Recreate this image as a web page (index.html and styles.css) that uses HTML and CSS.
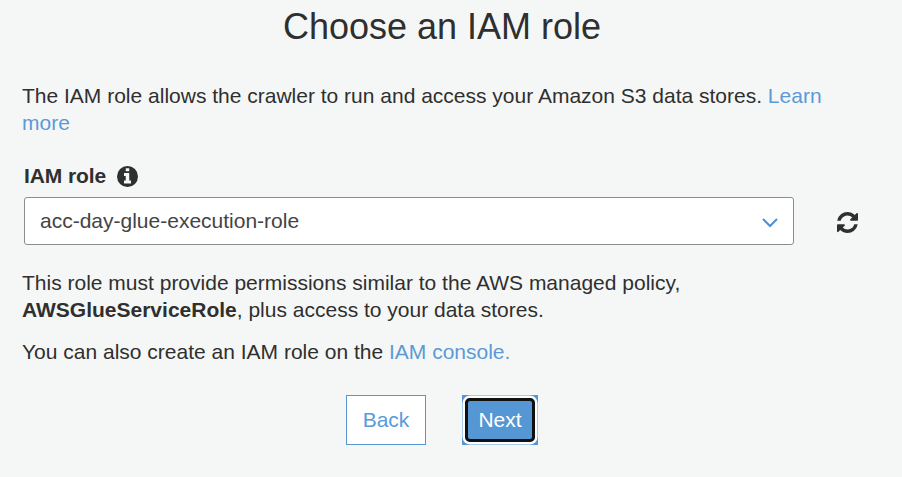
FILE: index.html
```html
<!DOCTYPE html>
<html lang="en">
<head>
<meta charset="utf-8">
<title>Choose an IAM role</title>
<link rel="stylesheet" href="styles.css">
</head>
<body>
<main class="step">
<h1 class="title">Choose an IAM role</h1>
<p class="intro">The IAM role allows the crawler to run and access your Amazon S3 data stores. <a href="#"><span>Learn</span> <span>more</span></a></p>
<div class="label-row"><span class="label">IAM role</span>
<svg class="info" viewBox="0 0 1536 1536" aria-hidden="true"><path fill="currentColor" fill-rule="evenodd" d="M768 0a768 768 0 1 1 0 1536a768 768 0 1 1 0-1536zM1024 1248v-160q0-14-9-23t-23-9h-96V544q0-14-9-23t-23-9H544q-14 0-23 9t-9 23v160q0 14 9 23t23 9h96v320h-96q-14 0-23 9t-9 23v160q0 14 9 23t23 9h448q14 0 23-9t9-23zM896 352V192q0-14-9-23t-23-9H672q-14 0-23 9t-9 23v160q0 14 9 23t23 9h192q14 0 23-9t9-23z"/></svg></div>
<div class="select-row">
<div class="select"><span class="value">acc-day-glue-execution-role</span>
<svg class="chevron" viewBox="0 0 16 10" aria-hidden="true"><path d="M1 1l7 7 7-7" fill="none" stroke="currentColor" stroke-width="2"/></svg></div>
<svg class="refresh" viewBox="0 0 1536 1536" aria-hidden="true"><path fill="currentColor" d="M1511 928q0 5-1 7-64 268-268 434.500T764 1536q-146 0-282.500-55T238 1324l-129 129q-19 19-45 19t-45-19-19-45V960q0-26 19-45t45-19h448q26 0 45 19t19 45-19 45l-137 137q71 66 161 102t187 36q134 0 250-65t186-179q11-17 53-117 8-23 30-23h192q13 0 22.500 9.500t9.500 22.500zm25-800v448q0 26-19 45t-45 19h-448q-26 0-45-19t-19-45 19-45l138-138Q969 256 768 256q-134 0-250 65T332 500q-11 17-53 117-8 23-30 23H50q-13 0-22.500-9.500T18 608v-7q65-268 270-434.500T768 0q146 0 284 55.500T1297 212l130-129q19-19 45-19t45 19 19 45z"/></svg>
</div>
<p class="note">This role must provide permissions similar to the AWS managed policy,<br><strong>AWSGlueServiceRole</strong>, plus access to your data stores.</p>
<p class="create">You can also create an IAM role on the <a href="#">IAM console.</a></p>
<div class="actions"><button class="back">Back</button><button class="next"><span class="focus-ring">Next</span></button></div>
</main>
</body>
</html>
```
FILE: styles.css
```css
* { box-sizing: border-box; }
body { margin: 0; background: #f5f7f6; color: #2f2f2f; font: 21px/27px "Liberation Sans", Arial, sans-serif; }
.step { padding: 5px 22px 0; height: 477px; overflow: hidden; }
.title { margin: 0; font-size: 36px; line-height: 43px; font-weight: 400; text-align: center; padding-right: 18px; }
p { margin: 0; }
a { color: #5b9ad8; text-decoration: none; }
.intro { margin-top: 34px; width: 820px; }
.label-row { display: flex; align-items: center; height: 27px; margin: 26px 0 8px 2px; }
.label { font-weight: 700; letter-spacing: -.1px; }
.info { width: 21px; height: 21px; margin: 1px 0 0 11px; }
.select-row { display: flex; align-items: center; margin-left: 2px; }
.select { width: 770px; height: 48px; display: flex; align-items: center; justify-content: space-between; background: #fff; border: 1px solid #8c8c8c; border-radius: 3px; padding: 0 15px; color: #444; }
.value { padding-bottom: 2px; }
.chevron { width: 16px; height: 10px; color: #4a90d9; margin-top: 3px; }
.refresh { width: 21px; height: 21px; margin: 3px 0 0 43px; }
.note { margin-top: 24px; }
.create { margin-top: 15px; }
.actions { display: flex; align-items: center; margin: 30px 0 0 324px; gap: 36px; }
button { font: inherit; height: 50px; padding: 0; border: 1px solid #5596d3; border-radius: 0; }
.back { width: 80px; padding-bottom: 2px; background: #fff; color: #5b9ad8; }
.next { width: 76px; border: 0; background: #5596d5; color: #fff; }
.focus-ring { display: flex; align-items: center; justify-content: center; width: 70px; height: 44px; margin: 0 auto; padding-bottom: 2px; border: 3px solid #111; border-radius: 5px; box-shadow: 0 0 0 2.5px #fff; }
```
